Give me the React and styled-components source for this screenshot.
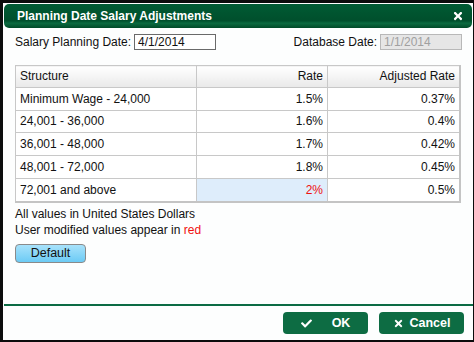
import React from "react";
import styled, { createGlobalStyle } from "styled-components";
import { FaCheck, FaTimes } from "react-icons/fa";

const Global = createGlobalStyle`
  html, body { margin: 0; padding: 0; background: #000; }
  body { font-family: "Liberation Sans", Arial, sans-serif; font-size: 12px; color: #111; }
`;

const Frame = styled.div`
  width: 474px;
  height: 342px;
  box-sizing: border-box;
  background: #0c0c0c;
  padding: 3px 1px 2px 3px;
`;

const Window = styled.div`
  height: 100%;
  box-sizing: border-box;
  background: #fdfefe;
  display: flex;
  flex-direction: column;
  padding: 1px 0 0 1px;
`;

const TitleBar = styled.div`
  height: 24px;
  margin-right: 1px;
  border-radius: 5px;
  background: linear-gradient(to bottom, #005b34 0%, #004f2c 70%, #0b6a40 80%, #004a28 100%);
  display: flex;
  align-items: center;
  justify-content: space-between;
  padding: 0 8px 0 13px;
  color: #fff;
  font-weight: bold;
  font-size: 12px;
`;

const Close = styled.span`
  display: flex;
  font-size: 12px;
`;

const Content = styled.div`
  flex: 1;
  display: flex;
  flex-direction: column;
  padding: 6px 11px 0 11px;
`;

const DateRow = styled.div`
  display: flex;
  align-items: center;
  justify-content: space-between;
  height: 16px;
`;

const Field = styled.label`
  display: flex;
  align-items: center;
  gap: 3px;
`;

const DateInput = styled.input`
  width: 82px;
  height: 16px;
  box-sizing: border-box;
  border: 1px solid ${p => (p.disabled ? "#b8b8b8" : "#6a6a6a")};
  background: ${p => (p.disabled ? "#e6e6e6" : "#fff")};
  color: ${p => (p.disabled ? "#a0a0a0" : "#111")};
  font-family: "Liberation Sans", Arial, sans-serif;
  font-size: 12px;
  padding: 0 3px;
  margin: 0;
`;

const Table = styled.table`
  margin-top: 15px;
  width: 446px;
  table-layout: fixed;
  border-collapse: collapse;
  border: 1px solid #c4c4c4;
  border-right-width: 2px;
  border-bottom-width: 2px;
  box-sizing: border-box;
`;

const Th = styled.th`
  box-sizing: border-box;
  height: 21.8px;
  padding: 0 4px;
  font-weight: normal;
  text-align: ${p => (p.$right ? "right" : "left")};
  background: linear-gradient(to bottom, #ffffff, #e9e9e9);
  border: 1px solid #c8c8c8;
  width: ${p => (p.$w ? `${p.$w}px` : "auto")};
`;

const Td = styled.td`
  height: 21.8px;
  padding: 0 4px;
  text-align: ${p => (p.$right ? "right" : "left")};
  border: 1px solid #c8c8c8;
  background: ${p => (p.$edit ? "#deedfb" : "#fff")};
  color: ${p => (p.$red ? "#f01010" : "#111")};
`;

const Notes = styled.div`
  margin-top: 3px;
  line-height: 16px;
`;

const Red = styled.span`
  color: #f01010;
`;

const DefaultButton = styled.button`
  margin-top: 6px;
  width: 71px;
  height: 19px;
  border: 1px solid #8a8a8a;
  border-radius: 4px;
  background: linear-gradient(to bottom, #a8e2fb, #6ccbf5);
  font-family: "Liberation Sans", Arial, sans-serif;
  font-size: 12.5px;
  color: #111;
  padding: 0;
  align-self: flex-start;
`;

const Footer = styled.div`
  box-sizing: border-box;
  border-top: 2px solid #0b6b44;
  height: 36px;
  display: flex;
  justify-content: flex-end;
  align-items: flex-start;
  gap: 11px;
  padding: 6px 9px 0 0;
  margin-top: auto;
`;

const ActionButton = styled.button`
  width: 85px;
  height: 22px;
  border: none;
  border-radius: 4px;
  background: #0d6c43;
  color: #fff;
  font-family: "Liberation Sans", Arial, sans-serif;
  font-weight: bold;
  font-size: 12.5px;
  display: flex;
  align-items: center;
  justify-content: center;
  gap: ${p => p.$gap}px;
  padding: 0;
`;

const rows = [
  ["Minimum Wage - 24,000", "1.5%", "0.37%"],
  ["24,001 - 36,000", "1.6%", "0.4%"],
  ["36,001 - 48,000", "1.7%", "0.42%"],
  ["48,001 - 72,000", "1.8%", "0.45%"],
  ["72,001 and above", "2%", "0.5%", true],
];

export default function App() {
  return (
    <>
      <Global />
      <Frame>
        <Window>
          <TitleBar>
            <span>Planning Date Salary Adjustments</span>
            <Close><FaTimes /></Close>
          </TitleBar>
          <Content>
            <DateRow>
              <Field>
                Salary Planning Date:
                <DateInput defaultValue="4/1/2014" />
              </Field>
              <Field>
                Database Date:
                <DateInput disabled defaultValue="1/1/2014" />
              </Field>
            </DateRow>
            <Table>
              <thead>
                <tr>
                  <Th $w={181}>Structure</Th>
                  <Th $w={131} $right>Rate</Th>
                  <Th $right>Adjusted Rate</Th>
                </tr>
              </thead>
              <tbody>
                {rows.map(([s, r, a, mod]) => (
                  <tr key={s}>
                    <Td>{s}</Td>
                    <Td $right $edit={mod} $red={mod}>{r}</Td>
                    <Td $right>{a}</Td>
                  </tr>
                ))}
              </tbody>
            </Table>
            <Notes>
              <div>All values in United States Dollars</div>
              <div>User modified values appear in <Red>red</Red></div>
            </Notes>
            <DefaultButton>Default</DefaultButton>
          </Content>
          <Footer>
            <ActionButton $gap={20}><FaCheck size={11} />OK</ActionButton>
            <ActionButton $gap={6}><FaTimes size={11} />Cancel</ActionButton>
          </Footer>
        </Window>
      </Frame>
    </>
  );
}
